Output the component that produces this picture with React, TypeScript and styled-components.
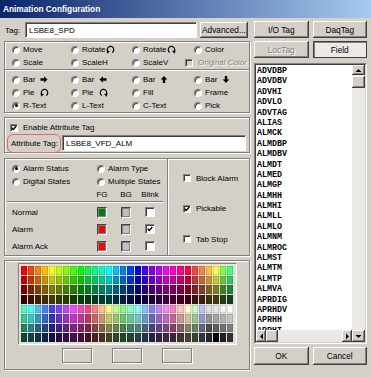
import React from 'react';
import styled, { createGlobalStyle, css } from 'styled-components';

const GlobalStyle = createGlobalStyle`
    html, body {
        margin: 0;
        padding: 0;
        background: #ffffff;
    }
    body {
        font-family: "Liberation Sans", Arial, sans-serif;
        font-size: 8px;
        color: #000000;
    }
    * {
        box-sizing: border-box;
    }
`;

const FACE = '#d4d0c8';

const raised = css`
    box-shadow: inset -1px -1px #404040, inset 1px 1px #ffffff, inset -2px -2px #808080;
`;

const Window = styled.div`
    width: 371px;
    height: 377px;
    background: ${FACE};
    display: flex;
    flex-direction: column;
    overflow: hidden;
`;

const TitleBar = styled.div`
    height: 18px;
    flex: none;
    display: flex;
    align-items: center;
    padding-left: 3px;
    background: linear-gradient(to right, #0a246a, #a6caf0);
    color: #ffffff;
    font-weight: bold;
    font-size: 8.3px;
`;

const Body = styled.div`
    display: flex;
    gap: 4px;
    padding: 0 4px;
`;

const LeftPane = styled.div`
    width: 246px;
    display: flex;
    flex-direction: column;
`;

const RightPane = styled.div`
    width: 113px;
    display: flex;
    flex-direction: column;
    padding-top: 3px;
`;

const TagRow = styled.div`
    margin-top: 4px;
    height: 16px;
    display: flex;
    align-items: center;
`;

const FieldLabel = styled.span`
    width: 21px;
    padding-left: 1px;
`;

const TextInput = styled.div<{ $width: number }>`
    width: ${p => p.$width}px;
    height: 16px;
    display: flex;
    align-items: center;
    padding-left: 3px;
    background: #ffffff;
    border: 1px solid;
    border-color: #808080 #ffffff #ffffff #808080;
    box-shadow: inset 1px 1px #404040;
`;

const PushButton = styled.div<{ $width?: number; $height?: number; $state?: 'pressed' | 'disabled' }>`
    width: ${p => (p.$width ? `${p.$width}px` : 'auto')};
    flex: ${p => (p.$width ? 'none' : '1')};
    height: ${p => p.$height || 17}px;
    display: flex;
    align-items: center;
    justify-content: center;
    font-size: 8.3px;
    background: ${FACE};
    ${raised};
    ${p =>
        p.$state === 'pressed' &&
        css`
            background: #eceae6;
            box-shadow: inset 1px 1px #404040, inset -1px -1px #404040, inset 2px 2px #808080;
        `}
    ${p =>
        p.$state === 'disabled' &&
        css`
            color: #808080;
            text-shadow: 1px 1px #ffffff;
        `}
`;

const ButtonRow = styled.div<{ $top: number; $height?: number }>`
    margin-top: ${p => p.$top}px;
    display: flex;
    gap: 4px;
`;

const GroupBox = styled.div<{ $top: number; $height: number }>`
    margin-top: ${p => p.$top}px;
    height: ${p => p.$height}px;
    border: 1px solid #808080;
    box-shadow: inset 1px 1px #ffffff, 1px 1px #ffffff;
    position: relative;
`;

const OptionGrid = styled.div<{ $top: number }>`
    display: grid;
    grid-template-columns: 59px 61px 53px 1fr;
    grid-auto-rows: 13px;
    padding: ${p => p.$top}px 0 0 7px;
`;

const Option = styled.div<{ $indent?: number; $disabled?: boolean }>`
    display: flex;
    align-items: center;
    white-space: nowrap;
    padding-left: ${p => p.$indent || 0}px;
    ${p =>
        p.$disabled &&
        css`
            color: #808080;
            text-shadow: 1px 1px #ffffff;
        `}
`;

const RadioMark = styled.span<{ $checked?: boolean }>`
    width: 8px;
    height: 8px;
    margin-right: 3px;
    flex: none;
    display: inline-grid;
    place-items: center;
    border-radius: 50%;
    background: #ffffff;
    border: 1px solid;
    border-color: #808080 #ffffff #ffffff #808080;
    box-shadow: inset 1px 1px 0 #404040, 0 0 0 0.5px #c8c4bc;
    &::after {
        content: '';
        width: 3px;
        height: 3px;
        border-radius: 50%;
        background: ${p => (p.$checked ? '#000000' : 'transparent')};
    }
`;

const CheckMark = styled.span<{ $disabled?: boolean; $gap?: number }>`
    width: 8px;
    height: 8px;
    margin-right: ${p => (p.$gap === undefined ? 5 : p.$gap)}px;
    flex: none;
    display: inline-grid;
    place-items: center;
    background: ${p => (p.$disabled ? FACE : '#ffffff')};
    border: 1px solid;
    border-color: #808080 #ffffff #ffffff #808080;
    box-shadow: inset 1px 1px #404040;
`;

const TabText = styled.span`
    width: 17px;
`;

const Separator = styled.div<{ $inset?: string }>`
    height: 2px;
    margin: ${p => p.$inset || '0'};
    border-top: 1px solid #808080;
    border-bottom: 1px solid #ffffff;
`;

const AttrRow = styled.div`
    display: flex;
    align-items: flex-start;
    margin-left: 2px;
    margin-top: 0;
`;

const AttrLabel = styled.div`
    width: 54px;
    height: 19px;
    flex: none;
    display: flex;
    align-items: center;
    padding-left: 3px;
    border: 1px solid #e06a6a;
    border-radius: 6px;
    white-space: nowrap;
`;

const AttrInputSlot = styled.div`
    margin: 1px 0 0 1px;
`;

const CheckRow = styled.div<{ $height: number; $pad: string }>`
    height: ${p => p.$height}px;
    padding: ${p => p.$pad};
    display: flex;
    align-items: center;
    white-space: nowrap;
`;

const AlarmSplit = styled.div`
    display: flex;
    height: 100%;
`;

const AlarmLeft = styled.div`
    width: 162px;
    padding-top: 3px;
`;

const VDivider = styled.div`
    width: 2px;
    border-left: 1px solid #808080;
    border-right: 1px solid #ffffff;
    margin: 0;
`;

const AlarmRight = styled.div`
    flex: 1;
    padding: 13px 0 0 14px;
    display: flex;
    flex-direction: column;
    gap: 18.7px;
`;

const ModeGrid = styled.div`
    display: grid;
    grid-template-columns: 85px 1fr;
    grid-auto-rows: 13px;
    padding-left: 7px;
`;

const StateGrid = styled.div<{ $rowHeight: number }>`
    display: grid;
    grid-template-columns: 78px 24px 24px 24px;
    grid-auto-rows: ${p => p.$rowHeight}px;
    align-items: center;
    padding-left: 7px;
`;

const StateCell = styled.div`
    display: flex;
    justify-content: center;
    align-items: center;
`;

const Swatch = styled.span<{ $color: string }>`
    width: 10px;
    height: 11px;
    display: inline-grid;
    place-items: center;
    border: 1px solid;
    border-color: #404040 #ffffff #ffffff #404040;
    background: #b8b4ac;
    &::after {
        content: '';
        width: 6px;
        height: 7px;
        background: ${p => p.$color};
        border: 1px solid #808080;
    }
`;

const PaletteGrid = styled.div`
    width: 219px;
    height: 82px;
    margin: 2px auto 0;
    padding: 2px;
    display: grid;
    grid-template-columns: repeat(30, 1fr);
    grid-template-rows: repeat(8, 1fr);
    gap: 1px;
    background: #e4e2dc;
    border: 1px solid;
    border-color: #808080 #ffffff #ffffff #808080;
`;

const PaletteCell = styled.span<{ $color: string }>`
    background: ${p => p.$color};
    box-shadow: inset 0 0 0 0.5px rgba(0, 0, 0, 0.25);
`;

const PreviewRow = styled.div`
    display: flex;
    justify-content: center;
    gap: 20px;
    margin-top: 3px;
`;

const PreviewBox = styled.div`
    width: 30px;
    height: 15px;
    border: 1px solid #808080;
    box-shadow: inset 1px 1px #ffffff, 1px 1px #ffffff;
`;

const ListFrame = styled.div`
    margin-top: 5px;
    height: 281px;
    border: 1px solid;
    border-color: #808080 #ffffff #ffffff #808080;
`;

const ListInner = styled.div`
    height: 100%;
    display: flex;
    background: #ffffff;
    border: 1px solid;
    border-color: #404040 ${FACE} ${FACE} #404040;
`;

const ListMain = styled.div`
    flex: 1;
    display: flex;
    flex-direction: column;
    min-width: 0;
`;

const ListItems = styled.div`
    flex: 1;
    overflow: hidden;
    padding: 1px 0 0 1px;
    font-family: "Liberation Mono", "Courier New", monospace;
    font-weight: bold;
    font-size: 8.3px;
`;

const ListItem = styled.div`
    height: 10.4px;
    line-height: 10.4px;
    white-space: nowrap;
`;

const ScrollTrack = styled.div<{ $vertical?: boolean }>`
    display: flex;
    flex-direction: ${p => (p.$vertical ? 'column' : 'row')};
    ${p => (p.$vertical ? 'width: 13px;' : 'height: 12px;')}
    flex: none;
    background: #ebe9e5;
`;

const ScrollButton = styled.div<{ $w: number; $h: number }>`
    width: ${p => p.$w}px;
    height: ${p => p.$h}px;
    flex: none;
    display: grid;
    place-items: center;
    background: ${FACE};
    ${raised};
`;

const ScrollFill = styled.div`
    flex: 1;
`;

const DialogButtons = styled.div`
    margin-top: 3px;
    display: flex;
    gap: 4px;
`;

const Arrow: React.FC<{ dir: 'right' | 'left' | 'up' | 'down' }> = ({ dir }) => {
    const angle = { right: 0, left: 180, up: -90, down: 90 }[dir];
    return (
        <svg width="8" height="7" viewBox="0 0 8 8">
            <g transform={`rotate(${angle} 4 4)`}>
                <polygon points="0,2.6 4,2.6 4,0.2 8,4 4,7.8 4,5.4 0,5.4" fill="#000" />
            </g>
        </svg>
    );
};

const Spin: React.FC<{ cw?: boolean }> = ({ cw }) => (
    <svg width="9" height="9" viewBox="0 0 10 10">
        <g transform={cw ? 'translate(10 0) scale(-1 1)' : undefined}>
            <path d="M6.9 8.2 A3.6 3.6 0 1 0 2.4 7.6" fill="none" stroke="#000" strokeWidth="1.3" />
            <polygon points="0.4,6.2 4.4,6.6 1.6,9.6" fill="#000" />
        </g>
    </svg>
);

const Tick = () => (
    <svg width="6" height="6" viewBox="0 0 7 7">
        <polyline points="0.8,3.2 2.6,5.2 6.2,1.2" fill="none" stroke="#000" strokeWidth="1.6" />
    </svg>
);

const Tri: React.FC<{ dir: 'up' | 'down' | 'left' | 'right' }> = ({ dir }) => {
    const pts = {
        up: '0.5,4 3.5,1 6.5,4',
        down: '0.5,1 3.5,4 6.5,1',
        left: '4,0.5 1,3.5 4,6.5',
        right: '1,0.5 4,3.5 1,6.5',
    }[dir];
    const vertical = dir === 'up' || dir === 'down';
    return (
        <svg width={vertical ? 7 : 5} height={vertical ? 5 : 7} viewBox={vertical ? '0 0 7 5' : '0 0 5 7'}>
            <polygon points={pts} fill="#000" />
        </svg>
    );
};

const Radio: React.FC<{ label: React.ReactNode; checked?: boolean; indent?: number }> = ({ label, checked, indent }) => (
    <Option $indent={indent}>
        <RadioMark $checked={checked} />
        {label}
    </Option>
);

const Check: React.FC<{ label: string; checked?: boolean; disabled?: boolean }> = ({ label, checked, disabled }) => (
    <Option $disabled={disabled}>
        <CheckMark $disabled={disabled}>{checked && <Tick />}</CheckMark>
        {label}
    </Option>
);

const toHex = (r: number, g: number, b: number) =>
    '#' + [r, g, b].map(v => Math.round(Math.max(0, Math.min(255, v))).toString(16).padStart(2, '0')).join('');

const shade = (hex: string, f: number) =>
    toHex(parseInt(hex.slice(1, 3), 16) * f, parseInt(hex.slice(3, 5), 16) * f, parseInt(hex.slice(5, 7), 16) * f);

const hue = (h: number) => {
    const f = (n: number) => {
        const k = (n + h / 60) % 6;
        return 255 * (1 - Math.max(0, Math.min(k, 4 - k, 1)));
    };
    return toHex(f(5), f(3), f(1));
};

const brightRow = [
    ...Array.from({ length: 24 }, (_, i) => hue(i * 15)),
    '#ff4040', '#ff8040', '#ffc040', '#ffff40', '#80ff40', '#40ff80',
];

const pastelRow = [
    '#40ffc0', '#40ffff', '#40c0ff', '#4080ff', '#4040ff', '#8040ff', '#c040ff', '#ff40ff', '#ff40c0',
    '#ff4080', '#ff8080', '#ffc080', '#ffff80', '#c0ff80', '#80ff80', '#80ffc0', '#80ffff', '#80c0ff',
    '#8080ff', '#c080ff', '#ff80ff', '#ff80c0', '#ffc0c0', '#ffffc0', '#c0ffc0', '#c0c0ff',
];

const grays = [
    ['#e0e0e0', '#e8e8e8', '#f2f2f2', '#ffffff'],
    ['#949494', '#a4a4a4', '#b4b4b4', '#c4c4c4'],
    ['#4c4c4c', '#5c5c5c', '#707070', '#808080'],
    ['#282828', '#000000', '#202020', '#303030'],
];

const palette = [
    brightRow,
    brightRow.map(c => shade(c, 0.78)),
    brightRow.map(c => shade(c, 0.5)),
    brightRow.map(c => shade(c, 0.25)),
    [...pastelRow, ...grays[0]],
    [...pastelRow.map(c => shade(c, 0.78)), ...grays[1]],
    [...pastelRow.map(c => shade(c, 0.52)), ...grays[2]],
    [...pastelRow.map(c => shade(c, 0.27)), ...grays[3]],
].flat();

const tagFields = [
    'ADVDBP', 'ADVDBV', 'ADVHI', 'ADVLO', 'ADVTAG', 'ALIAS', 'ALMCK', 'ALMDBP', 'ALMDBV', 'ALMDT',
    'ALMED', 'ALMGP', 'ALMHH', 'ALMHI', 'ALMLL', 'ALMLO', 'ALMNM', 'ALMROC', 'ALMST', 'ALMTM',
    'ALMTP', 'ALMVA', 'APRDIG', 'APRHDV', 'APRHH', 'APRHI',
];

const states = [
    { label: 'Normal', fg: '#008000', blink: false },
    { label: 'Alarm', fg: '#ff0000', blink: true },
    { label: 'Alarm Ack', fg: '#ff0000', blink: false },
];

const App: React.FC = () => {
    return (
        <Window>
            <GlobalStyle />
            <TitleBar>Animation Configuration</TitleBar>
            <Body>
                <LeftPane>
                    <TagRow>
                        <FieldLabel>Tag:</FieldLabel>
                        <TextInput $width={172}>LSBE8_SPD</TextInput>
                        <PushButton $width={48} $height={16} style={{ marginLeft: 3 }}>
                            Advanced...
                        </PushButton>
                    </TagRow>

                    <GroupBox $top={3} $height={72}>
                        <OptionGrid $top={1}>
                            <Radio label="Move" />
                            <Radio label={<>Rotate<Spin /></>} />
                            <Radio label={<>Rotate<Spin cw /></>} />
                            <Radio label="Color" indent={9} />
                            <Radio label="Scale" />
                            <Radio label="ScaleH" />
                            <Radio label="ScaleV" />
                            <Check label="Original Color" disabled />
                        </OptionGrid>
                        <Separator />
                        <OptionGrid $top={2}>
                            <Radio label={<><TabText>Bar</TabText><Arrow dir="right" /></>} />
                            <Radio label={<><TabText>Bar</TabText><Arrow dir="left" /></>} />
                            <Radio label={<><TabText>Bar</TabText><Arrow dir="up" /></>} />
                            <Radio label={<><TabText>Bar</TabText><Arrow dir="down" /></>} indent={9} />
                            <Radio label={<><TabText>Pie</TabText><Spin /></>} />
                            <Radio label={<><TabText>Pie</TabText><Spin cw /></>} />
                            <Radio label="Fill" />
                            <Radio label="Frame" indent={9} />
                            <Radio label="R-Text" checked />
                            <Radio label="L-Text" />
                            <Radio label="C-Text" />
                            <Radio label="Pick" indent={9} />
                        </OptionGrid>
                    </GroupBox>

                    <GroupBox $top={4} $height={36}>
                        <CheckRow $height={12} $pad="3px 0 0 5px" style={{ height: 16 }}>
                            <CheckMark>
                                <Tick />
                            </CheckMark>
                            Enable Attribute Tag
                        </CheckRow>
                        <AttrRow>
                            <AttrLabel>Attribute Tag:</AttrLabel>
                            <AttrInputSlot>
                                <TextInput $width={184}>LSBE8_VFD_ALM</TextInput>
                            </AttrInputSlot>
                        </AttrRow>
                    </GroupBox>

                    <GroupBox $top={5} $height={98}>
                        <AlarmSplit>
                            <AlarmLeft>
                                <ModeGrid>
                                    <Radio label="Alarm Status" checked />
                                    <Radio label="Alarm Type" />
                                    <Radio label="Digital States" />
                                    <Radio label="Multiple States" />
                                </ModeGrid>
                                <StateGrid $rowHeight={13}>
                                    <span />
                                    <StateCell>FG</StateCell>
                                    <StateCell>BG</StateCell>
                                    <StateCell>Blink</StateCell>
                                </StateGrid>
                                <Separator $inset="0 0 0 2px" style={{ width: 156 }} />
                                <StateGrid $rowHeight={17} style={{ marginTop: 0.5 }}>
                                    {states.map(s => (
                                        <React.Fragment key={s.label}>
                                            <span>{s.label}</span>
                                            <StateCell>
                                                <Swatch $color={s.fg} />
                                            </StateCell>
                                            <StateCell>
                                                <Swatch $color="#c0c0c0" />
                                            </StateCell>
                                            <StateCell>
                                                <CheckMark $gap={0} style={{ width: 10, height: 10 }}>
                                                    {s.blink && <Tick />}
                                                </CheckMark>
                                            </StateCell>
                                        </React.Fragment>
                                    ))}
                                </StateGrid>
                            </AlarmLeft>
                            <VDivider />
                            <AlarmRight>
                                <CheckRow $height={12} $pad="0">
                                    <CheckMark />
                                    Block Alarm
                                </CheckRow>
                                <CheckRow $height={12} $pad="0">
                                    <CheckMark>
                                        <Tick />
                                    </CheckMark>
                                    Pickable
                                </CheckRow>
                                <CheckRow $height={12} $pad="0">
                                    <CheckMark />
                                    Tab Stop
                                </CheckRow>
                            </AlarmRight>
                        </AlarmSplit>
                    </GroupBox>

                    <GroupBox $top={4} $height={110}>
                        <PaletteGrid>
                            {palette.map((c, i) => (
                                <PaletteCell key={i} $color={c} />
                            ))}
                        </PaletteGrid>
                        <PreviewRow>
                            <PreviewBox />
                            <PreviewBox />
                            <PreviewBox />
                        </PreviewRow>
                    </GroupBox>
                </LeftPane>

                <RightPane>
                    <ButtonRow $top={0}>
                        <PushButton>I/O Tag</PushButton>
                        <PushButton>DaqTag</PushButton>
                    </ButtonRow>
                    <ButtonRow $top={3}>
                        <PushButton $state="disabled">LocTag</PushButton>
                        <PushButton $state="pressed">Field</PushButton>
                    </ButtonRow>
                    <ListFrame>
                        <ListInner>
                            <ListMain>
                                <ListItems>
                                    {tagFields.map(f => (
                                        <ListItem key={f}>{f}</ListItem>
                                    ))}
                                </ListItems>
                                <ScrollTrack>
                                    <ScrollButton $w={10} $h={12}>
                                        <Tri dir="left" />
                                    </ScrollButton>
                                    <ScrollButton $w={12} $h={12} />
                                    <ScrollFill />
                                    <ScrollButton $w={10} $h={12}>
                                        <Tri dir="right" />
                                    </ScrollButton>
                                </ScrollTrack>
                            </ListMain>
                            <ScrollTrack $vertical>
                                <ScrollButton $w={13} $h={10}>
                                    <Tri dir="up" />
                                </ScrollButton>
                                <ScrollButton $w={13} $h={12} style={{ marginTop: 1 }} />
                                <ScrollFill />
                                <ScrollButton $w={13} $h={12}>
                                    <Tri dir="down" />
                                </ScrollButton>
                            </ScrollTrack>
                        </ListInner>
                    </ListFrame>
                    <DialogButtons>
                        <PushButton $height={18}>OK</PushButton>
                        <PushButton $height={18}>Cancel</PushButton>
                    </DialogButtons>
                </RightPane>
            </Body>
        </Window>
    );
};

export default App;
